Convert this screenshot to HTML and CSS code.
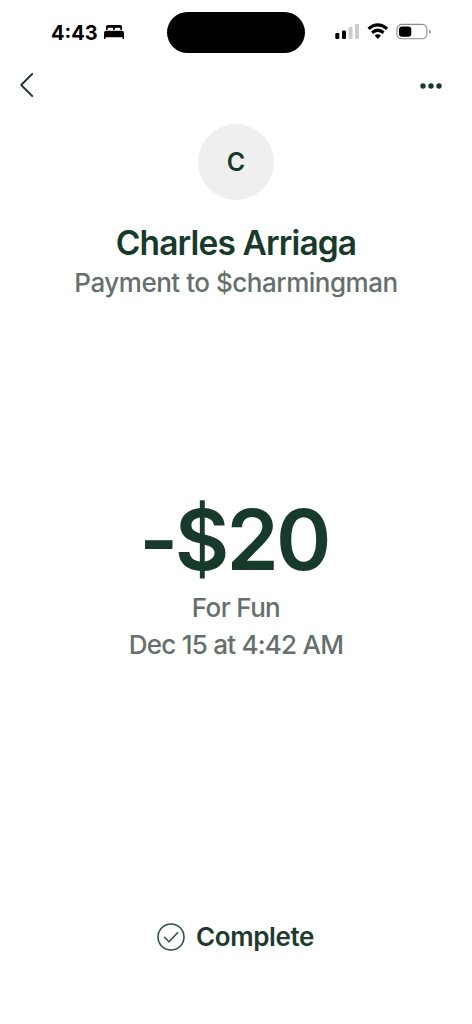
FILE: index.html
```html
<!DOCTYPE html>
<html lang="en">
<head>
<meta charset="utf-8">
<title>Payment</title>
<link rel="stylesheet" href="styles.css">
</head>
<body>
<main class="screen">
  <header class="status">
    <div class="clock"><span class="time">4:43</span>
      <svg class="bed" viewBox="0 0 22 16" width="22" height="16"><path d="M3 6V3Q3 1 5 1H17Q19 1 19 3V6H17.4V5Q17.4 3.8 16.2 3.8H13Q11.8 3.8 11.8 5V6H10.2V5Q10.2 3.8 9 3.8H5.8Q4.6 3.8 4.6 5V6ZM1 15V9Q1 6.8 3.2 6.8H18.8Q21 6.8 21 9V15H19.6V13.3H2.4V15Z"/></svg>
    </div>
    <div class="island"></div>
    <svg class="signals" viewBox="0 0 98 20" width="98" height="20">
      <rect x="0.3" y="11" width="4" height="6" rx="1"/>
      <rect x="7" y="8.5" width="4" height="8.5" rx="1"/>
      <rect class="dim" x="13.6" y="5" width="4" height="12" rx="1"/>
      <rect class="dim" x="20" y="2" width="4" height="15" rx="1"/>
      <path class="wave" d="M33.5 6.8Q42.8-1 52.1 6.8M37 10.7Q42.8 5.8 48.6 10.7"/>
      <path d="M39.7 13.5Q42.8 11 45.9 13.5L42.8 17Z"/>
      <rect class="shell" x="61.9" y="2.4" width="30" height="14.4" rx="4.8"/>
      <rect x="64" y="4.5" width="12.3" height="10.3" rx="3"/>
      <path class="cap" d="M94.3 7.7Q95.9 8.1 95.9 9.7T94.3 11.7Z"/>
    </svg>
  </header>
  <nav class="nav">
    <svg viewBox="0 0 16 26" width="16" height="26"><path class="back" d="M13.2 2L2.2 13L13.2 24"/></svg>
    <svg class="more" viewBox="0 0 24 8" width="24" height="8"><circle cx="4" cy="4" r="2.7"/><circle cx="12" cy="4" r="2.7"/><circle cx="20" cy="4" r="2.7"/></svg>
  </nav>
  <section class="person">
    <div class="avatar">C</div>
    <h1 class="name">Charles Arriaga</h1>
    <p class="handle">Payment to $charmingman</p>
  </section>
  <section class="payment">
    <div class="amount"><span class="minus">-</span>$20</div>
    <p class="note">For Fun</p>
    <p class="date">Dec 15 at 4:42 AM</p>
  </section>
  <footer class="state">
    <svg viewBox="0 0 28 28" width="28" height="28"><circle cx="14" cy="14" r="13"/><path d="M7.5 14.3L12 18.8L20.6 9.7"/></svg>
    <span class="complete">Complete</span>
  </footer>
</main>
</body>
</html>
```
FILE: styles.css
```css
* { box-sizing: border-box; }
body { margin: 0; background: #fff; font-family: Inter, "Liberation Sans", sans-serif; color: #173a2b; }
h1, p { margin: 0; }
svg { display: block; flex: none; }
.screen { width: 472px; height: 1024px; display: flex; flex-direction: column; overflow: hidden; }
.status { height: 64px; padding: 12px 38px 0 51px; display: flex; align-items: flex-start; color: #000; }
.clock { width: 116px; padding-top: 8px; display: flex; gap: 5px; }
.time { font-size: 20px; line-height: 26px; font-weight: 700; white-space: nowrap; }
.bed { margin-top: 4px; }
.island { width: 138px; height: 41px; border-radius: 21px; background: #000; }
.signals { margin: 10px 0 0 30px; }
.dim { fill: #ccc; }
.wave { fill: none; stroke: #000; stroke-width: 3.2; }
.shell { fill: none; stroke: #8b8b8b; stroke-width: 1.1; }
.cap { fill: #888; }
.nav { height: 60px; padding: 8px 29px 0 19px; display: flex; justify-content: space-between; }
.back { fill: none; stroke: #20392e; stroke-width: 1.9; stroke-linecap: round; stroke-linejoin: round; }
.more { margin-top: 10px; fill: #173a2b; }
.person { height: 367px; display: flex; flex-direction: column; align-items: center; }
.avatar { width: 76px; height: 76px; margin-bottom: 23px; border-radius: 50%; background: #efefef; display: grid; place-items: center; font-size: 25px; font-weight: 600; }
.name { font-size: 33.5px; line-height: 40px; font-weight: 600; letter-spacing: -.87px; white-space: nowrap; }
.handle { margin-top: 1px; }
.handle, .note, .date { font-size: 26px; line-height: 37px; font-weight: 500; letter-spacing: -.48px; color: #66706b; white-space: nowrap; }
.note { letter-spacing: -.65px; }
.date { letter-spacing: -.77px; }
.payment { height: 428px; display: flex; flex-direction: column; align-items: center; }
.amount { margin-right: 4px; font-size: 84px; line-height: 98px; font-weight: 600; letter-spacing: -2.8px; white-space: nowrap; }
.minus { margin-right: -1px; }
.state { display: flex; justify-content: center; align-items: center; gap: 11px; height: 36px; padding-right: 1px; }
.state svg { fill: none; stroke: #315347; stroke-width: 1.6; stroke-linecap: round; stroke-linejoin: round; }
.complete { font-size: 26px; line-height: 36px; font-weight: 600; letter-spacing: -.4px; color: #20392e; }
```
